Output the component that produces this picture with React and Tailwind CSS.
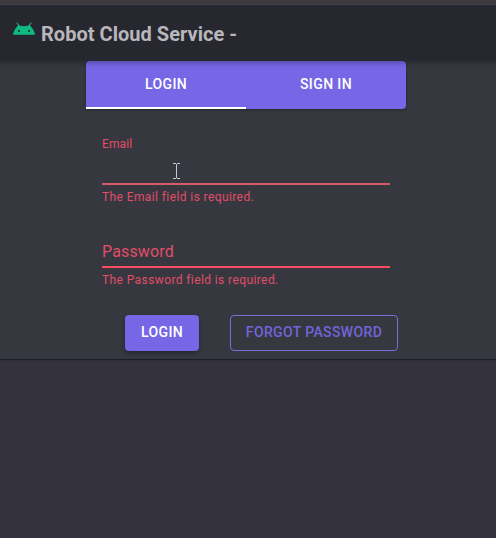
function RobotIcon() {
  return (
    <svg className="mt-[17px] h-[14px] w-[24px] shrink-0" viewBox="0 0 24 14">
      <path d="M5 1l2.200 3.200M19 1l-2.200 3.200" stroke="#2f9f80" strokeWidth="1.200" strokeLinecap="round" />
      <path d="M1 12.800C1.300 9.300 3.400 6.400 5.800 3.800C7 3 8.500 4.200 12 4.200S17 3 18.200 3.800C20.600 6.400 22.700 9.300 23 12.800Z" fill="#0fba81" />
      <circle cx="7" cy="9" r="1" fill="#27272f" />
      <circle cx="17" cy="9" r="1" fill="#27272f" />
    </svg>
  );
}

function TextCursor() {
  return (
    <svg className="absolute left-[71px] top-[12px] h-[16px] w-[7px]" viewBox="0 0 7 16" shapeRendering="crispEdges">
      <path d="M0 0h3v1H0zM4 0h3v1H4zM3 1h1v14H3zM0 15h3v1H0zM4 15h3v1H4z" fill="#c9c7d4" />
    </svg>
  );
}

export default function App() {
  return (
    <div className="flex h-[538px] w-[496px] flex-col overflow-hidden bg-[#33323d] font-['Roboto',sans-serif]">
      <div className="h-[5px] shrink-0 border-b border-[#454449] bg-[#3e3c41]" />
      <header className="z-10 flex h-[56px] shrink-0 bg-[#27272f] pl-[12px] shadow-[0_2px_5px_rgba(0,0,0,0.28)]">
        <RobotIcon />
        <h1 className="ml-[5px] mt-[15px] whitespace-nowrap text-[20px] font-bold leading-[28px] tracking-[0.03px] text-[#b8b7bc]">
          Robot Cloud Service -
        </h1>
      </header>
      <main className="h-[299px] shrink-0 border-b border-[#1e1d27] bg-[#373740] pl-[86px] shadow-[0_1px_2px_rgba(0,0,0,0.12)]">
        <nav className="flex h-[48px] w-[320px] rounded-[4px] bg-[#7767e6] text-[14px] font-medium tracking-[0.4px] text-white shadow-[0_1px_3px_rgba(0,0,0,0.35)]">
          <button className="w-[160px] border-b-2 border-white pt-[1px]">LOGIN</button>
          <button className="w-[160px] pb-[1px]">SIGN IN</button>
        </nav>
        <form className="px-[16px] text-[#e04e68]">
          <div className="w-[288px]">
            <label className="block pt-[27px] text-[12px] leading-[16px] tracking-[0.11px]">Email</label>
            <div className="relative mt-[-1px] h-[34px] border-b-2 border-[#d55b6a]">
              <TextCursor />
            </div>
            <p className="mt-[3px] text-[12px] leading-[18px] tracking-[0.4px]">The Email field is required.</p>
          </div>
          <div className="w-[288px] pt-[34px]">
            <label className="block h-[28px] border-b-2 border-[#fa4d60] text-[16px] leading-[24px] tracking-[0.15px]">Password</label>
            <p className="mt-[3px] text-[12px] leading-[18px] tracking-[0.4px]">The Password field is required.</p>
          </div>
          <div className="ml-[23px] mt-[26px] flex gap-[31px] text-[14px] font-medium">
            <button className="h-[36px] w-[74px] rounded-[4px] bg-[#7767e6] pb-[2px] tracking-[0.37px] text-white shadow-[0_2px_4px_rgba(0,0,0,0.35)]">LOGIN</button>
            <button className="h-[36px] w-[168px] shrink-0 whitespace-nowrap rounded-[4px] border border-[#7b6edb] pb-[2px] tracking-[0.37px] text-[#7165da]">FORGOT PASSWORD</button>
          </div>
        </form>
      </main>
    </div>
  );
}
